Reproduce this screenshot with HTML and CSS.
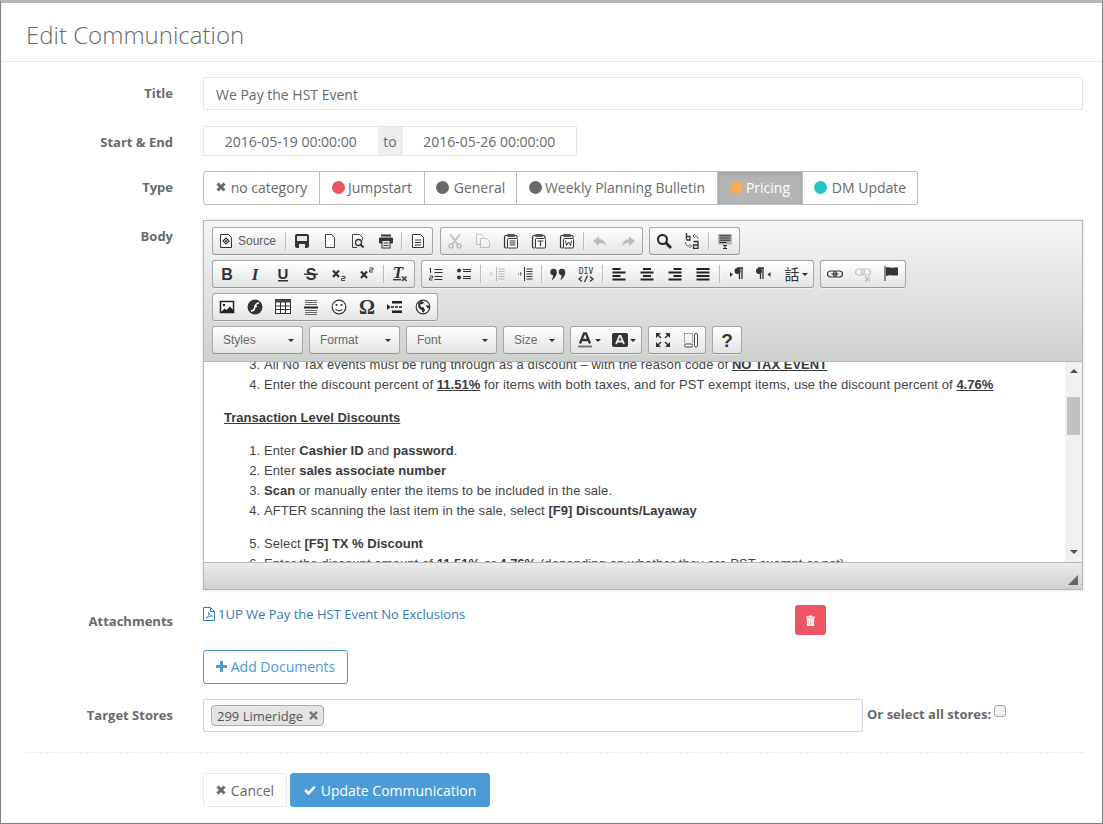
FILE: index.html
```html
<!DOCTYPE html>
<html lang="en">
<head>
    <meta charset="UTF-8">
    <meta name="viewport" content="width=device-width, initial-scale=1.0">
    <title>Edit Communication</title>
    <link rel="stylesheet" href="styles.css">
</head>
<body>
    <svg class="icon-defs" xmlns="http://www.w3.org/2000/svg">
        <symbol id="i-source" viewBox="0 0 16 16"><path d="M2.5 1.5h8l3 3v10h-11z" fill="#fff" stroke="#333"/><path d="M8 5l3 3-3 3-3-3z" fill="none" stroke="#333" stroke-width="1.2"/><circle cx="8" cy="8" r="1" fill="#333"/></symbol>
        <symbol id="i-save" viewBox="0 0 16 16"><rect x="1" y="1" width="14" height="14" rx="2" fill="#333"/><rect x="3" y="3" width="10" height="5" fill="#e8e8e8"/><rect x="5" y="11" width="6" height="4" fill="#e8e8e8"/></symbol>
        <symbol id="i-new" viewBox="0 0 16 16"><path d="M3.5 1.5h6l3 3v10h-9z" fill="#fff" stroke="#444"/></symbol>
        <symbol id="i-preview" viewBox="0 0 16 16"><path d="M2.5 1.5h7l3 3v3M7 14.5H2.500v-13" fill="none" stroke="#444"/><circle cx="8.500" cy="9.500" r="3" fill="none" stroke="#333" stroke-width="1.300"/><path d="M10.500 11.500l3 3" stroke="#333" stroke-width="2"/></symbol>
        <symbol id="i-print" viewBox="0 0 16 16"><rect x="3" y="1.500" width="10" height="2" fill="#333"/><rect x="1" y="4.500" width="14" height="6" rx="1" fill="#333"/><rect x="4" y="7.500" width="8" height="7.500" fill="#eee" stroke="#333"/><path d="M5.500 10h5M5.500 12.500h5" stroke="#333"/></symbol>
        <symbol id="i-templates" viewBox="0 0 16 16"><path d="M2.500 1.500h8l3 3v10h-11z" fill="#fff" stroke="#333"/><path d="M5 7h6M5 9.500h6M5 12h6" stroke="#333"/></symbol>
        <symbol id="i-cut" viewBox="0 0 16 16"><path d="M3 1l7.500 10M13 1L5.500 11" stroke="#555" stroke-width="2"/><circle cx="4" cy="13" r="2" fill="none" stroke="#555" stroke-width="1.500"/><circle cx="12" cy="13" r="2" fill="none" stroke="#555" stroke-width="1.500"/></symbol>
        <symbol id="i-copy" viewBox="0 0 16 16"><path d="M1.500 1.500h5l2 2v1M5 11.500H1.500v-10" fill="none" stroke="#555"/><path d="M5.500 5.500h6l3 3v6h-9z" fill="#fff" stroke="#555"/></symbol>
        <symbol id="i-paste" viewBox="0 0 16 16"><path d="M4 2.500H3A1.500 1.500 0 0 0 1.500 4v9.500A1.500 1.500 0 0 0 3 15h1M12 2.500h.5A1.500 1.500 0 0 1 14 4v1" fill="none" stroke="#333" stroke-width="1.200"/><rect x="4" y="1" width="8" height="3" rx="1" fill="#555"/><rect x="4.500" y="5.500" width="10" height="9.500" rx="1" fill="#fff" stroke="#333"/><path d="M6.500 8h6M6.500 10h6M6.500 12h6" stroke="#333" stroke-width="1.100"/></symbol>
        <symbol id="i-paste-text" viewBox="0 0 16 16"><path d="M4 2.500H3A1.500 1.500 0 0 0 1.500 4v9.500A1.500 1.500 0 0 0 3 15h1M12 2.500h.5A1.500 1.500 0 0 1 14 4v1" fill="none" stroke="#333" stroke-width="1.200"/><rect x="4" y="1" width="8" height="3" rx="1" fill="#555"/><rect x="4.500" y="5.500" width="10" height="9.500" rx="1" fill="#fff" stroke="#333"/><path d="M6.500 8h6M9.500 8v5" stroke="#333" stroke-width="1.200"/></symbol>
        <symbol id="i-paste-word" viewBox="0 0 16 16"><path d="M4 2.500H3A1.500 1.500 0 0 0 1.500 4v9.500A1.500 1.500 0 0 0 3 15h1M12 2.500h.5A1.500 1.500 0 0 1 14 4v1" fill="none" stroke="#333" stroke-width="1.200"/><rect x="4" y="1" width="8" height="3" rx="1" fill="#555"/><rect x="4.500" y="5.500" width="10" height="9.500" rx="1" fill="#fff" stroke="#333"/><path d="M6.500 7.500l1 5 2-3.500 2 3.500 1-5" fill="none" stroke="#333"/></symbol>
        <symbol id="i-undo" viewBox="0 0 16 16"><path d="M7 3L1 8l6 5v-3c3 0 5 .5 7 3-.5-4-3-7-7-7z" fill="#444"/></symbol>
        <symbol id="i-redo" viewBox="0 0 16 16"><path d="M9 3l6 5-6 5v-3c-3 0-5 .5-7 3 .5-4 3-7 7-7z" fill="#444"/></symbol>
        <symbol id="i-find" viewBox="0 0 16 16"><circle cx="6.500" cy="6.500" r="4.500" fill="none" stroke="#222" stroke-width="2"/><path d="M10 10l5 5" stroke="#222" stroke-width="2.600"/></symbol>
        <symbol id="i-replace" viewBox="0 0 16 16"><path d="M2.500 0v6.500M2.500 3.500h3.500v3.500h-3.500" fill="none" stroke="#333" stroke-width="1.300"/><path d="M14 6c0-2-1-3-3-3M11 1L9 3l2 2" fill="none" stroke="#555"/><path d="M1.500 9c0 3 1 4 4 4M5.500 11l2 2-2 2" fill="none" stroke="#555"/><path d="M9.500 8.500h4.500v7H9.500v-3.500h4.500" fill="none" stroke="#333" stroke-width="1.300"/></symbol>
        <symbol id="i-selectall" viewBox="0 0 16 16"><rect x="1" y="1" width="14" height="10.500" fill="#b4b4b4"/><path d="M2.500 2.800h11M2.500 5h11M2.500 7.200h11M2.500 9.500h7" stroke="#222"/><path d="M6 12.500h4M8 12.500v3M6 15.500h4" stroke="#222"/></symbol>
        <symbol id="i-bold" viewBox="0 0 16 16"><text x="8" y="14" class="ig-b">B</text></symbol>
        <symbol id="i-italic" viewBox="0 0 16 16"><text x="8" y="14" class="ig-i">I</text></symbol>
        <symbol id="i-underline" viewBox="0 0 16 16"><text x="8" y="12.500" class="ig-s">U</text><rect x="3" y="14" width="10" height="1.500" fill="#333"/></symbol>
        <symbol id="i-strike" viewBox="0 0 16 16"><text x="8" y="14" class="ig-b">S</text><rect x="1" y="7.500" width="14" height="1.400" fill="#333"/></symbol>
        <symbol id="i-sub" viewBox="0 0 16 16"><path d="M2 4.500l6 6.500M8 4.500l-6 6.500" stroke="#333" stroke-width="2.200"/><path d="M10.500 10.500h3.500v2h-3.500v2h3.500" fill="none" stroke="#333" stroke-width=".9"/></symbol>
        <symbol id="i-sup" viewBox="0 0 16 16"><path d="M2 5.500l6 6.500M8 5.500l-6 6.500" stroke="#333" stroke-width="2.200"/><path d="M10.500 2h3.500v2h-3.500v2h3.500" fill="none" stroke="#333" stroke-width=".9"/></symbol>
        <symbol id="i-clear" viewBox="0 0 16 16"><text x="6" y="11.500" class="ig-i">T</text><rect x="1" y="13" width="8" height="1.400" fill="#333"/><path d="M10 10.500l4.500 4.500M14.500 10.500l-4.500 4.500" stroke="#444" stroke-width="1.700"/></symbol>
        <symbol id="i-ol" viewBox="0 0 16 16"><path d="M6.500 3.500h8M6.500 6.500h8M6.500 10.500h8M6.500 13.500h8" stroke="#333" stroke-width="1.100"/><path d="M2.500 2v5M1.500 2.500h1" fill="none" stroke="#333"/><path d="M1.500 10h3v2h-3v2h3" fill="none" stroke="#333" stroke-width=".9"/></symbol>
        <symbol id="i-ul" viewBox="0 0 16 16"><circle cx="3" cy="4.500" r="2" fill="#333"/><circle cx="3" cy="11.500" r="2" fill="#333"/><path d="M7 3.500h8M7 5.500h8M7 10.500h8M7 12.500h8" stroke="#333" stroke-width="1"/></symbol>
        <symbol id="i-outdent" viewBox="0 0 16 16"><path d="M7.500 1v14" stroke="#333" stroke-width="1"/><path d="M9.500 3h6M9.500 5.500h6M9.500 8h6M9.500 10.500h6M9.500 13h6" stroke="#333"/><path d="M1 8h4M3 6l-2 2 2 2" fill="none" stroke="#333" stroke-dasharray="1 1"/></symbol>
        <symbol id="i-indent" viewBox="0 0 16 16"><path d="M7.500 1v14" stroke="#333" stroke-width="1"/><path d="M9.500 3h6M9.500 5.500h6M9.500 8h6M9.500 10.500h6M9.500 13h6" stroke="#333"/><path d="M1 8h4M3 6l2 2-2 2" fill="none" stroke="#333" stroke-dasharray="1 1"/></symbol>
        <symbol id="i-quote" viewBox="0 0 16 16"><circle cx="3.500" cy="6" r="3.200" fill="#333"/><path d="M6.700 6c0 4-2 6-5 8.500 .8-2 1.500-4 1.500-6.500z" fill="#333"/><circle cx="12" cy="6" r="3.200" fill="#333"/><path d="M15.200 6c0 4-2 6-5 8.500 .8-2 1.500-4 1.500-6.500z" fill="#333"/></symbol>
        <symbol id="i-div" viewBox="0 0 16 16"><text x="8" y="8" class="ig-t">DIV</text><path d="M4 10.500l-3 2.500 3 2.500M12 10.500l3 2.500-3 2.500M9.500 9.500l-3 6.500" fill="none" stroke="#333" stroke-width="1.300"/></symbol>
        <symbol id="i-left" viewBox="0 0 16 16"><path d="M1.500 3h8M1.500 6.500h13M1.500 10h8M1.500 13.500h13" stroke="#222" stroke-width="2"/></symbol>
        <symbol id="i-center" viewBox="0 0 16 16"><path d="M4 3h8M1.500 6.500h13M4 10h8M1.500 13.500h13" stroke="#222" stroke-width="2"/></symbol>
        <symbol id="i-right" viewBox="0 0 16 16"><path d="M6.500 3h8M1.500 6.500h13M6.500 10h8M1.500 13.500h13" stroke="#222" stroke-width="2"/></symbol>
        <symbol id="i-justify" viewBox="0 0 16 16"><path d="M1.500 3h13M1.500 6.500h13M1.500 10h13M1.500 13.500h13" stroke="#222" stroke-width="2"/></symbol>
        <symbol id="i-ltr" viewBox="0 0 16 16"><path d="M2 6l3 2.500-3 2.500z" fill="#333"/><path d="M9 2h6M11.500 2v11M14 2v11" stroke="#333" stroke-width="1.300"/><circle cx="9.500" cy="5" r="3" fill="#333"/></symbol>
        <symbol id="i-rtl" viewBox="0 0 16 16"><path d="M14.500 6l-3 2.500 3 2.500z" fill="#333"/><path d="M2 2h6M4.500 2v11M7 2v11" stroke="#333" stroke-width="1.300"/><circle cx="3" cy="5" r="3" fill="#333"/></symbol>
        <symbol id="i-lang" viewBox="0 0 16 16"><text x="8" y="14" class="ig-c">話</text></symbol>
        <symbol id="i-link" viewBox="0 0 16 16"><rect x=".5" y="5" width="9" height="6" rx="3" fill="none" stroke="#333" stroke-width="1.200"/><rect x="6.500" y="5" width="9" height="6" rx="3" fill="none" stroke="#333" stroke-width="1.200"/><path d="M4.500 8h7" stroke="#333" stroke-width="1.100"/></symbol>
        <symbol id="i-unlink" viewBox="0 0 16 16"><rect x=".5" y="3" width="9" height="6" rx="3" fill="none" stroke="#555" stroke-width="1.200"/><rect x="6.500" y="3" width="9" height="6" rx="3" fill="none" stroke="#555" stroke-width="1.200"/><path d="M10 10.500l5 5M15 10.500l-5 5" stroke="#555" stroke-width="1.500"/></symbol>
        <symbol id="i-anchor" viewBox="0 0 16 16"><path d="M2 0v15" stroke="#333" stroke-width="1.100"/><path d="M3 1.500c3-1 4.500 .8 7.500 0H15v8h-3c-3 0-5-1-9 .5z" fill="#333"/></symbol>
        <symbol id="i-image" viewBox="0 0 16 16"><rect x="1.500" y="2.500" width="13" height="11" fill="#fff" stroke="#222" stroke-width="1.500"/><circle cx="5" cy="6" r="1.300" fill="#222"/><path d="M2 13l3.500-3.500 2 1.500 3.500-3.500 3 3.500V13z" fill="#222"/></symbol>
        <symbol id="i-flash" viewBox="0 0 16 16"><circle cx="8" cy="8" r="7.500" fill="#333"/><path d="M12 4c-3 0-3.500 1.500-4 4s-1.500 4-4 4" fill="none" stroke="#fff" stroke-width="1.500"/><path d="M7 7.500h3" stroke="#fff" stroke-width="1.300"/></symbol>
        <symbol id="i-table" viewBox="0 0 16 16"><rect x=".5" y=".5" width="15" height="14" fill="#fff" stroke="#333"/><rect x="0" y="0" width="16" height="3.500" fill="#444"/><path d="M5.500 3v11M10.500 3v11M1 7h14M1 10.500h14" stroke="#333"/></symbol>
        <symbol id="i-hr" viewBox="0 0 16 16"><path d="M2 1.500h12M2 3.500h12M2 5.500h12M2 11.500h12M2 13.500h12M2 15.500h12" stroke="#555" stroke-width=".9"/><rect x="1" y="7.500" width="14" height="2" fill="#222"/></symbol>
        <symbol id="i-smiley" viewBox="0 0 16 16"><circle cx="8" cy="8" r="6.800" fill="#fff" stroke="#333" stroke-width="1.200"/><circle cx="5.500" cy="6" r="1.100" fill="#333"/><circle cx="10.500" cy="6" r="1.100" fill="#333"/><path d="M4.500 10c1.500 2.500 5.500 2.500 7 0" fill="none" stroke="#333" stroke-width="1.100"/></symbol>
        <symbol id="i-omega" viewBox="0 0 16 16"><text x="8" y="15" class="ig-o">Ω</text></symbol>
        <symbol id="i-pagebreak" viewBox="0 0 16 16"><path d="M0 5v6l3.500-3z" fill="#222"/><rect x="5" y="2" width="10" height="2.500" fill="#222"/><rect x="5" y="11.500" width="10" height="2.500" fill="#222"/><path d="M4 8h12" stroke="#222" stroke-width="1.500" stroke-dasharray="3 1"/></symbol>
        <symbol id="i-iframe" viewBox="0 0 16 16"><circle cx="8" cy="8" r="6.800" fill="#fff" stroke="#333" stroke-width="1.200"/><path d="M3 4.500l3-2.500 3 1-1 2-3 .5 1 2.500 3 .500 1 3-2 2.500-1.500-3-3-2zM11 6l3 .5.500 3-2.500-.5z" fill="#333"/></symbol>
        <symbol id="i-textcolor" viewBox="0 0 16 16"><path d="M3 11.500L7 1.500h2l4 10M5 8h6" fill="none" stroke="#333" stroke-width="2.300"/><rect x="1" y="13.500" width="14" height="2" fill="#777"/></symbol>
        <symbol id="i-bgcolor" viewBox="0 0 16 16"><rect x="0" y="1" width="16" height="14" rx="2" fill="#333"/><path d="M4 12L7.500 4h1L12 12M5.500 9.500h5" fill="none" stroke="#eee" stroke-width="1.800"/></symbol>
        <symbol id="i-maximize" viewBox="0 0 16 16"><path d="M1 1h5L1 6zM15 1v5l-5-5zM1 15v-5l5 5zM15 15h-5l5-5z" fill="#333"/><path d="M3 3l3 3M13 3l-3 3M3 13l3-3M13 13l-3-3" stroke="#333" stroke-width="1.500"/></symbol>
        <symbol id="i-blocks" viewBox="0 0 16 16"><path d="M1.500 1.500h8M1.500 1.500v9M9.500 1.500v9" fill="none" stroke="#555" stroke-dasharray="1 1"/><rect x="1.500" y="12" width="8" height="3" rx="1.500" fill="#fff" stroke="#444"/><rect x="11.500" y="1.500" width="3" height="13.500" rx="1.500" fill="#fff" stroke="#444"/></symbol>
        <symbol id="i-help" viewBox="0 0 16 16"><text x="8" y="15" class="ig-h">?</text></symbol>
    </svg>

    <div class="page">
        <header class="page-head">
            <h1>Edit Communication</h1>
        </header>

        <main class="form">
            <div class="form-row form-row-title">
                <label class="form-label">Title</label>
                <div class="field field-title">We Pay the HST Event</div>
            </div>

            <div class="form-row">
                <label class="form-label form-label-date">Start &amp; End</label>
                <div class="date-range">
                    <div class="date-input">2016-05-19 00:00:00</div>
                    <div class="date-addon">to</div>
                    <div class="date-input">2016-05-26 00:00:00</div>
                </div>
            </div>

            <div class="form-row">
                <label class="form-label">Type</label>
                <div class="btn-group">
                    <button class="type-btn type-none"><svg class="fa-times" viewBox="0 0 10 10"><path d="M1.500 1.500l7 7M8.500 1.500l-7 7" stroke="#676a6c" stroke-width="3"/></svg>no category</button>
                    <button class="type-btn type-jump"><span class="dot dot-red"></span>Jumpstart</button>
                    <button class="type-btn type-general"><span class="dot dot-gray"></span>General</button>
                    <button class="type-btn type-weekly"><span class="dot dot-gray"></span>Weekly Planning Bulletin</button>
                    <button class="type-btn type-active"><span class="dot dot-orange"></span>Pricing</button>
                    <button class="type-btn type-dm"><span class="dot dot-teal"></span>DM Update</button>
                </div>
            </div>

            <div class="form-row form-row-top">
                <label class="form-label form-label-body">Body</label>
                <div class="editor">
                    <div class="editor-toolbar">
                        <div class="tb-row">
                            <div class="tb-group">
                                <span class="tb-btn tb-source"><svg class="ico"><use href="#i-source"/></svg><span class="tb-label">Source</span></span>
                                <span class="tb-sep"></span>
                                <span class="tb-btn"><svg class="ico"><use href="#i-save"/></svg></span>
                                <span class="tb-btn"><svg class="ico"><use href="#i-new"/></svg></span>
                                <span class="tb-btn"><svg class="ico"><use href="#i-preview"/></svg></span>
                                <span class="tb-btn"><svg class="ico"><use href="#i-print"/></svg></span>
                                <span class="tb-sep tb-sep-narrow"></span>
                                <span class="tb-btn"><svg class="ico"><use href="#i-templates"/></svg></span>
                            </div>
                            <div class="tb-group tb-group-wide">
                                <span class="tb-btn off"><svg class="ico"><use href="#i-cut"/></svg></span>
                                <span class="tb-btn off"><svg class="ico"><use href="#i-copy"/></svg></span>
                                <span class="tb-btn"><svg class="ico"><use href="#i-paste"/></svg></span>
                                <span class="tb-btn"><svg class="ico"><use href="#i-paste-text"/></svg></span>
                                <span class="tb-btn"><svg class="ico"><use href="#i-paste-word"/></svg></span>
                                <span class="tb-sep"></span>
                                <span class="tb-btn off"><svg class="ico"><use href="#i-undo"/></svg></span>
                                <span class="tb-btn off"><svg class="ico"><use href="#i-redo"/></svg></span>
                            </div>
                            <div class="tb-group">
                                <span class="tb-btn"><svg class="ico"><use href="#i-find"/></svg></span>
                                <span class="tb-btn"><svg class="ico"><use href="#i-replace"/></svg></span>
                                <span class="tb-sep"></span>
                                <span class="tb-btn"><svg class="ico"><use href="#i-selectall"/></svg></span>
                            </div>
                        </div>
                        <div class="tb-row">
                            <div class="tb-group">
                                <span class="tb-btn"><svg class="ico"><use href="#i-bold"/></svg></span>
                                <span class="tb-btn"><svg class="ico"><use href="#i-italic"/></svg></span>
                                <span class="tb-btn"><svg class="ico"><use href="#i-underline"/></svg></span>
                                <span class="tb-btn"><svg class="ico"><use href="#i-strike"/></svg></span>
                                <span class="tb-btn"><svg class="ico"><use href="#i-sub"/></svg></span>
                                <span class="tb-btn"><svg class="ico"><use href="#i-sup"/></svg></span>
                                <span class="tb-sep"></span>
                                <span class="tb-btn"><svg class="ico"><use href="#i-clear"/></svg></span>
                            </div>
                            <div class="tb-group">
                                <span class="tb-btn"><svg class="ico"><use href="#i-ol"/></svg></span>
                                <span class="tb-btn"><svg class="ico"><use href="#i-ul"/></svg></span>
                                <span class="tb-sep"></span>
                                <span class="tb-btn off"><svg class="ico"><use href="#i-outdent"/></svg></span>
                                <span class="tb-btn"><svg class="ico"><use href="#i-indent"/></svg></span>
                                <span class="tb-sep"></span>
                                <span class="tb-btn"><svg class="ico"><use href="#i-quote"/></svg></span>
                                <span class="tb-btn"><svg class="ico"><use href="#i-div"/></svg></span>
                                <span class="tb-sep"></span>
                                <span class="tb-btn"><svg class="ico"><use href="#i-left"/></svg></span>
                                <span class="tb-btn"><svg class="ico"><use href="#i-center"/></svg></span>
                                <span class="tb-btn"><svg class="ico"><use href="#i-right"/></svg></span>
                                <span class="tb-btn"><svg class="ico"><use href="#i-justify"/></svg></span>
                                <span class="tb-sep"></span>
                                <span class="tb-btn"><svg class="ico"><use href="#i-ltr"/></svg></span>
                                <span class="tb-btn"><svg class="ico"><use href="#i-rtl"/></svg></span>
                                <span class="tb-btn tb-arrow-btn"><svg class="ico"><use href="#i-lang"/></svg><span class="tb-caret"></span></span>
                            </div>
                            <div class="tb-group">
                                <span class="tb-btn"><svg class="ico"><use href="#i-link"/></svg></span>
                                <span class="tb-btn off"><svg class="ico"><use href="#i-unlink"/></svg></span>
                                <span class="tb-btn"><svg class="ico"><use href="#i-anchor"/></svg></span>
                            </div>
                        </div>
                        <div class="tb-row">
                            <div class="tb-group">
                                <span class="tb-btn"><svg class="ico"><use href="#i-image"/></svg></span>
                                <span class="tb-btn"><svg class="ico"><use href="#i-flash"/></svg></span>
                                <span class="tb-btn"><svg class="ico"><use href="#i-table"/></svg></span>
                                <span class="tb-btn"><svg class="ico"><use href="#i-hr"/></svg></span>
                                <span class="tb-btn"><svg class="ico"><use href="#i-smiley"/></svg></span>
                                <span class="tb-btn"><svg class="ico"><use href="#i-omega"/></svg></span>
                                <span class="tb-btn"><svg class="ico"><use href="#i-pagebreak"/></svg></span>
                                <span class="tb-btn"><svg class="ico"><use href="#i-iframe"/></svg></span>
                            </div>
                        </div>
                        <div class="tb-row">
                            <div class="tb-combo">Styles<span class="tb-caret"></span></div>
                            <div class="tb-combo">Format<span class="tb-caret"></span></div>
                            <div class="tb-combo">Font<span class="tb-caret"></span></div>
                            <div class="tb-combo tb-combo-size">Size<span class="tb-caret"></span></div>
                            <div class="tb-group">
                                <span class="tb-btn tb-color"><svg class="ico"><use href="#i-textcolor"/></svg><span class="tb-caret"></span></span>
                                <span class="tb-btn tb-color"><svg class="ico"><use href="#i-bgcolor"/></svg><span class="tb-caret"></span></span>
                            </div>
                            <div class="tb-group">
                                <span class="tb-btn"><svg class="ico"><use href="#i-maximize"/></svg></span>
                                <span class="tb-btn"><svg class="ico"><use href="#i-blocks"/></svg></span>
                            </div>
                            <div class="tb-group">
                                <span class="tb-btn"><svg class="ico"><use href="#i-help"/></svg></span>
                            </div>
                        </div>
                    </div>

                    <div class="editor-body">
                        <div class="editor-content">
                            <ol class="list-first" start="3">
                                <li>All No Tax events must be rung through as a discount – with the reason code of <b><u>NO TAX EVENT</u></b></li>
                                <li>Enter the discount percent of <b><u>11.51%</u></b> for items with both taxes, and for PST exempt items, use the discount percent of <b><u>4.76%</u></b></li>
                            </ol>
                            <p><b><u>Transaction Level Discounts</u></b></p>
                            <ol>
                                <li>Enter <b>Cashier ID</b> and <b>password</b>.</li>
                                <li>Enter <b>sales associate number</b></li>
                                <li><b>Scan</b> or manually enter the items to be included in the sale.</li>
                                <li>AFTER scanning the last item in the sale, select <b>[F9] Discounts/Layaway</b></li>
                            </ol>
                            <ol start="5">
                                <li>Select <b>[F5] TX % Discount</b></li>
                                <li>Enter the discount amount of <b>11.51%</b> or <b>4.76%</b> (depending on whether they are PST exempt or not)</li>
                            </ol>
                        </div>
                        <div class="scrollbar">
                            <span class="scroll-up"></span>
                            <span class="scroll-thumb"></span>
                            <span class="scroll-down"></span>
                        </div>
                    </div>

                    <div class="editor-foot">
                        <svg class="resizer" viewBox="0 0 10 10"><path d="M10 0v10H0z" fill="#666"/></svg>
                    </div>
                </div>
            </div>

            <div class="form-row form-row-top">
                <label class="form-label form-label-attach">Attachments</label>
                <div class="attach-wrap">
                    <div class="attach-item">
                        <a class="attach-link" href="#">
                            <svg class="fa-pdf" viewBox="0 0 12 14"><path d="M.5.500h7l4 4v9H.500z" fill="none" stroke="#337ab7"/><path d="M7.500.500v4h4" fill="none" stroke="#337ab7"/><path d="M3 11.500c2-1 3-4 2.500-6 1 2.500 2 3 4 3.500-2.500 0-4.500 1-6.500 2.500z" fill="none" stroke="#337ab7" stroke-width=".8"/></svg>1UP We Pay the HST Event No Exclusions
                        </a>
                        <button class="btn-trash"><svg class="fa-trash" viewBox="0 0 10 12"><path d="M3.500 1.500V.500h3v1H10v1.500H0V1.500zM1 3.500h8V12H1z" fill="#fff"/><path d="M3.200 5v5.500M5 5v5.500M6.800 5v5.500" stroke="#f4a5ae" stroke-width=".8"/></svg></button>
                    </div>
                    <button class="btn-add"><svg class="fa-plus" viewBox="0 0 11 11"><path d="M5.500 0v11M0 5.500h11" stroke="#4a9bd7" stroke-width="3"/></svg>Add Documents</button>
                </div>
            </div>

            <div class="form-row">
                <label class="form-label">Target Stores</label>
                <div class="store-select">
                    <span class="store-tag">299 Limeridge<svg class="tag-x" viewBox="0 0 8 8"><path d="M.8.800l6.400 6.400M7.200.800L.8 7.200" stroke="#777" stroke-width="2"/></svg></span>
                </div>
                <label class="all-stores">Or select all stores:<input type="checkbox" class="all-check"></label>
            </div>

            <div class="form-rule"></div>

            <div class="form-actions">
                <button class="btn-cancel"><svg class="fa-times" viewBox="0 0 10 10"><path d="M1.500 1.500l7 7M8.500 1.500l-7 7" stroke="#676a6c" stroke-width="3"/></svg>Cancel</button>
                <button class="btn-save"><svg class="fa-check" viewBox="0 0 12 10"><path d="M1.200 5l3.300 3.300 6.300-6.500" fill="none" stroke="#fff" stroke-width="2.600"/></svg>Update Communication</button>
            </div>
        </main>
    </div>
</body>
</html>
```

FILE: styles.css
```css
* {
    box-sizing: border-box;
}

html, body {
    margin: 0;
    padding: 0;
    height: 100%;
}

body {
    font-family: "Open Sans", Arial, sans-serif;
    font-size: 13px;
    color: #676a6c;
    background: #fff;
    overflow: hidden;
}

.icon-defs {
    display: none;
}

.page {
    height: 824px;
    border-top: 3px solid #b4b8ba;
    border-left: 1px solid #808080;
    border-right: 1px solid #808080;
    border-bottom: 1px solid #808080;
    background: #fff;
}

.page-head {
    height: 59px;
    padding: 4px 0 0 25px;
    border-bottom: 1px solid #e7eaec;
    display: flex;
    align-items: center;
}

.page-head h1 {
    margin: 0;
    font-size: 24px;
    font-weight: 300;
    color: #676a6c;
}

.form {
    padding: 15px 19px 0 23px;
}

.form-row {
    display: flex;
    align-items: center;
    margin-bottom: 15px;
}

.form-row-title {
    margin-bottom: 16px;
}

.form-row-top {
    align-items: flex-start;
}

.form-label {
    width: 149px;
    margin-right: 30px;
    padding-bottom: 2px;
    flex-shrink: 0;
    text-align: right;
    font-weight: 700;
    font-size: 13px;
}

.form-label-date {
    padding: 2px 0 0;
}

.form-label-body,
.form-label-attach {
    padding: 7px 0 0;
}

.field {
    flex: 1;
    height: 33px;
    padding: 0 12px;
    line-height: 33px;
    font-size: 14px;
    border: 1px solid #e5e6e7;
    border-radius: 1px;
}

.date-range {
    display: flex;
    width: 374px;
    height: 30px;
    line-height: 30px;
    font-size: 14px;
    border: 1px solid #e5e6e7;
    border-radius: 1px;
}

.date-input {
    flex: 1;
    text-align: center;
}

.date-addon {
    width: 25px;
    text-align: center;
    background: #eee;
}

.btn-group {
    display: flex;
    height: 34px;
}

.type-btn {
    height: 34px;
    padding: 0 0 2px;
    font-family: inherit;
    font-size: 14px;
    color: #676a6c;
    background: #fff;
    border: 1px solid #bbb;
    border-left: none;
    display: flex;
    align-items: center;
    justify-content: center;
}

.type-none {
    width: 117px;
    border-left: 1px solid #bbb;
    border-radius: 3px 0 0 3px;
}

.type-jump {
    width: 105px;
}

.type-general {
    width: 92px;
}

.type-weekly {
    width: 201px;
}

.type-active {
    width: 85px;
    color: #fff;
    background: #b5b5b5;
    box-shadow: inset 0 2px 4px rgba(0, 0, 0, 0.1);
}

.type-dm {
    width: 115px;
    border-radius: 0 3px 3px 0;
}

.dot {
    width: 13px;
    height: 13px;
    margin-right: 3px;
    border-radius: 50%;
    flex-shrink: 0;
}

.dot-red {
    background: #ed5565;
}

.dot-gray {
    background: #676a6c;
}

.dot-orange {
    background: #f8ac59;
}

.dot-teal {
    background: #23c6c8;
}

.type-general .dot,
.type-dm .dot {
    margin-right: 5px;
}

.fa-times {
    width: 10px;
    height: 10px;
    margin-right: 5px;
    flex-shrink: 0;
}

/* ckeditor box */
.editor {
    flex: 1;
    height: 370px;
    border: 1px solid #b6b6b6;
    box-shadow: 0 0 3px rgba(0, 0, 0, 0.15);
    font-family: "Liberation Sans", Arial, sans-serif;
}

.editor-toolbar {
    height: 141px;
    padding: 6px 8px 0;
    background: linear-gradient(to bottom, #f5f5f5, #cfd1cf);
    border-bottom: 1px solid #b6b6b6;
}

.tb-row {
    display: flex;
    gap: 6px;
    height: 28px;
    margin-bottom: 5px;
}

.tb-group {
    display: flex;
    align-items: center;
    height: 28px;
    border: 1px solid #a6a6a6;
    border-bottom-color: #979797;
    border-radius: 3px;
    background: linear-gradient(to bottom, #fff, #e4e4e4);
    box-shadow: 0 1px 0 rgba(255, 255, 255, 0.5);
}

.tb-group-wide {
    margin-left: 1px;
}

.tb-btn {
    width: 28px;
    height: 26px;
    display: flex;
    align-items: center;
    justify-content: center;
}

.tb-btn.off .ico {
    opacity: 0.3;
}

.ico {
    width: 16px;
    height: 16px;
    flex-shrink: 0;
}

.tb-source {
    width: 70px;
    justify-content: flex-start;
    padding-left: 5px;
}

.tb-label {
    margin-left: 4px;
    font-size: 12px;
    color: #5a5a5a;
    text-shadow: 0 1px 0 rgba(255, 255, 255, 0.5);
}

.tb-sep {
    width: 1px;
    height: 18px;
    margin: 0 2px;
    background: #bcbcbc;
    box-shadow: 1px 0 1px rgba(255, 255, 255, 0.5);
}

.tb-sep-narrow {
    margin: 0 2px 0 1px;
}

.tb-caret {
    width: 0;
    height: 0;
    margin-left: 2px;
    border-top: 3px solid #2f2f2f;
    border-left: 3px solid transparent;
    border-right: 3px solid transparent;
}

.tb-arrow-btn {
    width: 35px;
}

.tb-color {
    width: 35px;
}

.tb-combo {
    width: 91px;
    height: 28px;
    padding: 0 8px 0 10px;
    display: flex;
    align-items: center;
    justify-content: space-between;
    font-size: 12px;
    color: #666;
    border: 1px solid #a6a6a6;
    border-bottom-color: #979797;
    border-radius: 3px;
    background: linear-gradient(to bottom, #fff, #e4e4e4);
    text-shadow: 0 1px 0 rgba(255, 255, 255, 0.5);
}

.tb-combo-size {
    width: 61px;
}

.editor-body {
    display: flex;
    height: 200px;
    background: #fff;
}

.editor-content {
    flex: 1;
    padding: 0 20px;
    overflow: hidden;
    color: #444;
    font-size: 13px;
    line-height: 20px;
    letter-spacing: 0.1px;
}

.editor-content b {
    color: #3a3a3a;
    letter-spacing: 0;
}

.editor-content p,
.editor-content ol {
    margin: 13px 0;
}

.editor-content ol {
    padding-left: 40px;
}

.editor-content .list-first {
    margin-top: -7px;
}

.scrollbar {
    width: 17px;
    background: #f1f1f1;
    display: flex;
    flex-direction: column;
    align-items: center;
    padding-top: 7px;
}

.scroll-up {
    width: 0;
    height: 0;
    border-bottom: 4px solid #505050;
    border-left: 4px solid transparent;
    border-right: 4px solid transparent;
}

.scroll-thumb {
    width: 13px;
    height: 38px;
    margin-top: 24px;
    background: #c1c1c1;
}

.scroll-down {
    width: 0;
    height: 0;
    margin-top: 115px;
    border-top: 4px solid #505050;
    border-left: 4px solid transparent;
    border-right: 4px solid transparent;
}

.editor-foot {
    height: 27px;
    display: flex;
    justify-content: flex-end;
    align-items: flex-end;
    padding: 0 4px 4px 0;
    border-top: 1px solid #b6b6b6;
    background: linear-gradient(to bottom, #ebebeb, #cfd1cf);
}

.resizer {
    width: 10px;
    height: 10px;
}

/* attachments */
.attach-wrap {
    flex: 1;
}

.attach-item {
    display: flex;
    height: 30px;
    margin-bottom: 15px;
}

.attach-link {
    width: 592px;
    display: flex;
    align-items: flex-start;
    color: #337ab7;
    font-size: 13px;
    line-height: 18px;
    text-decoration: none;
}

.fa-pdf {
    width: 12px;
    height: 14px;
    margin: 2px 3px 0 0;
    flex-shrink: 0;
}

.btn-trash {
    width: 31px;
    height: 30px;
    padding: 0;
    border: none;
    border-radius: 3px;
    background: #ed5565;
    display: flex;
    align-items: center;
    justify-content: center;
}

.fa-trash {
    width: 9px;
    height: 11px;
}

.btn-add {
    height: 34px;
    width: 145px;
    padding: 0 0 2px;
    font-family: inherit;
    font-size: 14px;
    color: #4a9bd7;
    background: #fff;
    border: 1px solid #4a9bd7;
    border-radius: 3px;
    display: flex;
    align-items: center;
    justify-content: center;
}

.fa-plus {
    width: 11px;
    height: 11px;
    margin-right: 4px;
}

.store-select {
    width: 660px;
    height: 33px;
    padding: 5px 7px;
    border: 1px solid #c9d4e0;
    border-radius: 2px;
}

.store-tag {
    display: inline-flex;
    align-items: center;
    height: 21px;
    padding: 0 5px;
    font-size: 13px;
    color: #555;
    background: #e4e4e4;
    border: 1px solid #aaa;
    border-radius: 4px;
}

.tag-x {
    width: 9px;
    height: 9px;
    margin-left: 6px;
}

.all-stores {
    display: flex;
    align-items: flex-start;
    margin: 0 0 3px 4px;
    font-weight: 700;
    font-size: 13px;
}

.all-check {
    appearance: none;
    width: 12px;
    height: 12px;
    margin: 0 0 0 3px;
    border: 1px solid #a9a9a9;
    border-radius: 3px;
    background: #efefef;
}

.form-rule {
    margin: 20px 0 20px 1px;
    border-top: 1px dashed #e7eaec;
}

.form-actions {
    display: flex;
    gap: 3px;
    padding-left: 179px;
}

.btn-cancel,
.btn-save {
    height: 34px;
    padding: 0;
    font-family: inherit;
    font-size: 14px;
    border-radius: 3px;
    display: flex;
    align-items: center;
    justify-content: center;
}

.btn-cancel {
    width: 84px;
    color: #676a6c;
    background: #fff;
    border: 1px solid #e7eaec;
}

.btn-save {
    width: 200px;
    color: #fff;
    background: #4a9bd7;
    border: 1px solid #4a9bd7;
    font-weight: 500;
}

.fa-check {
    width: 12px;
    height: 10px;
    margin-right: 5px;
}

.ig-b, .ig-s {
    font: 700 16px "Liberation Sans", Arial, sans-serif;
    fill: #333;
    text-anchor: middle;
}

.ig-s {
    font-size: 15px;
}

.ig-i {
    font: italic 700 17px "Liberation Serif", serif;
    fill: #333;
    text-anchor: middle;
}

.ig-t {
    font: 8px "DejaVu Sans Mono", monospace;
    fill: #333;
    text-anchor: middle;
}

.ig-c {
    font: 15px "Noto Sans CJK TC", sans-serif;
    fill: #333;
    text-anchor: middle;
}

.ig-o {
    font: 700 20px "Liberation Serif", serif;
    fill: #333;
    text-anchor: middle;
}

.ig-h {
    font: 700 19px "Liberation Sans", Arial, sans-serif;
    fill: #333;
    text-anchor: middle;
}
```
